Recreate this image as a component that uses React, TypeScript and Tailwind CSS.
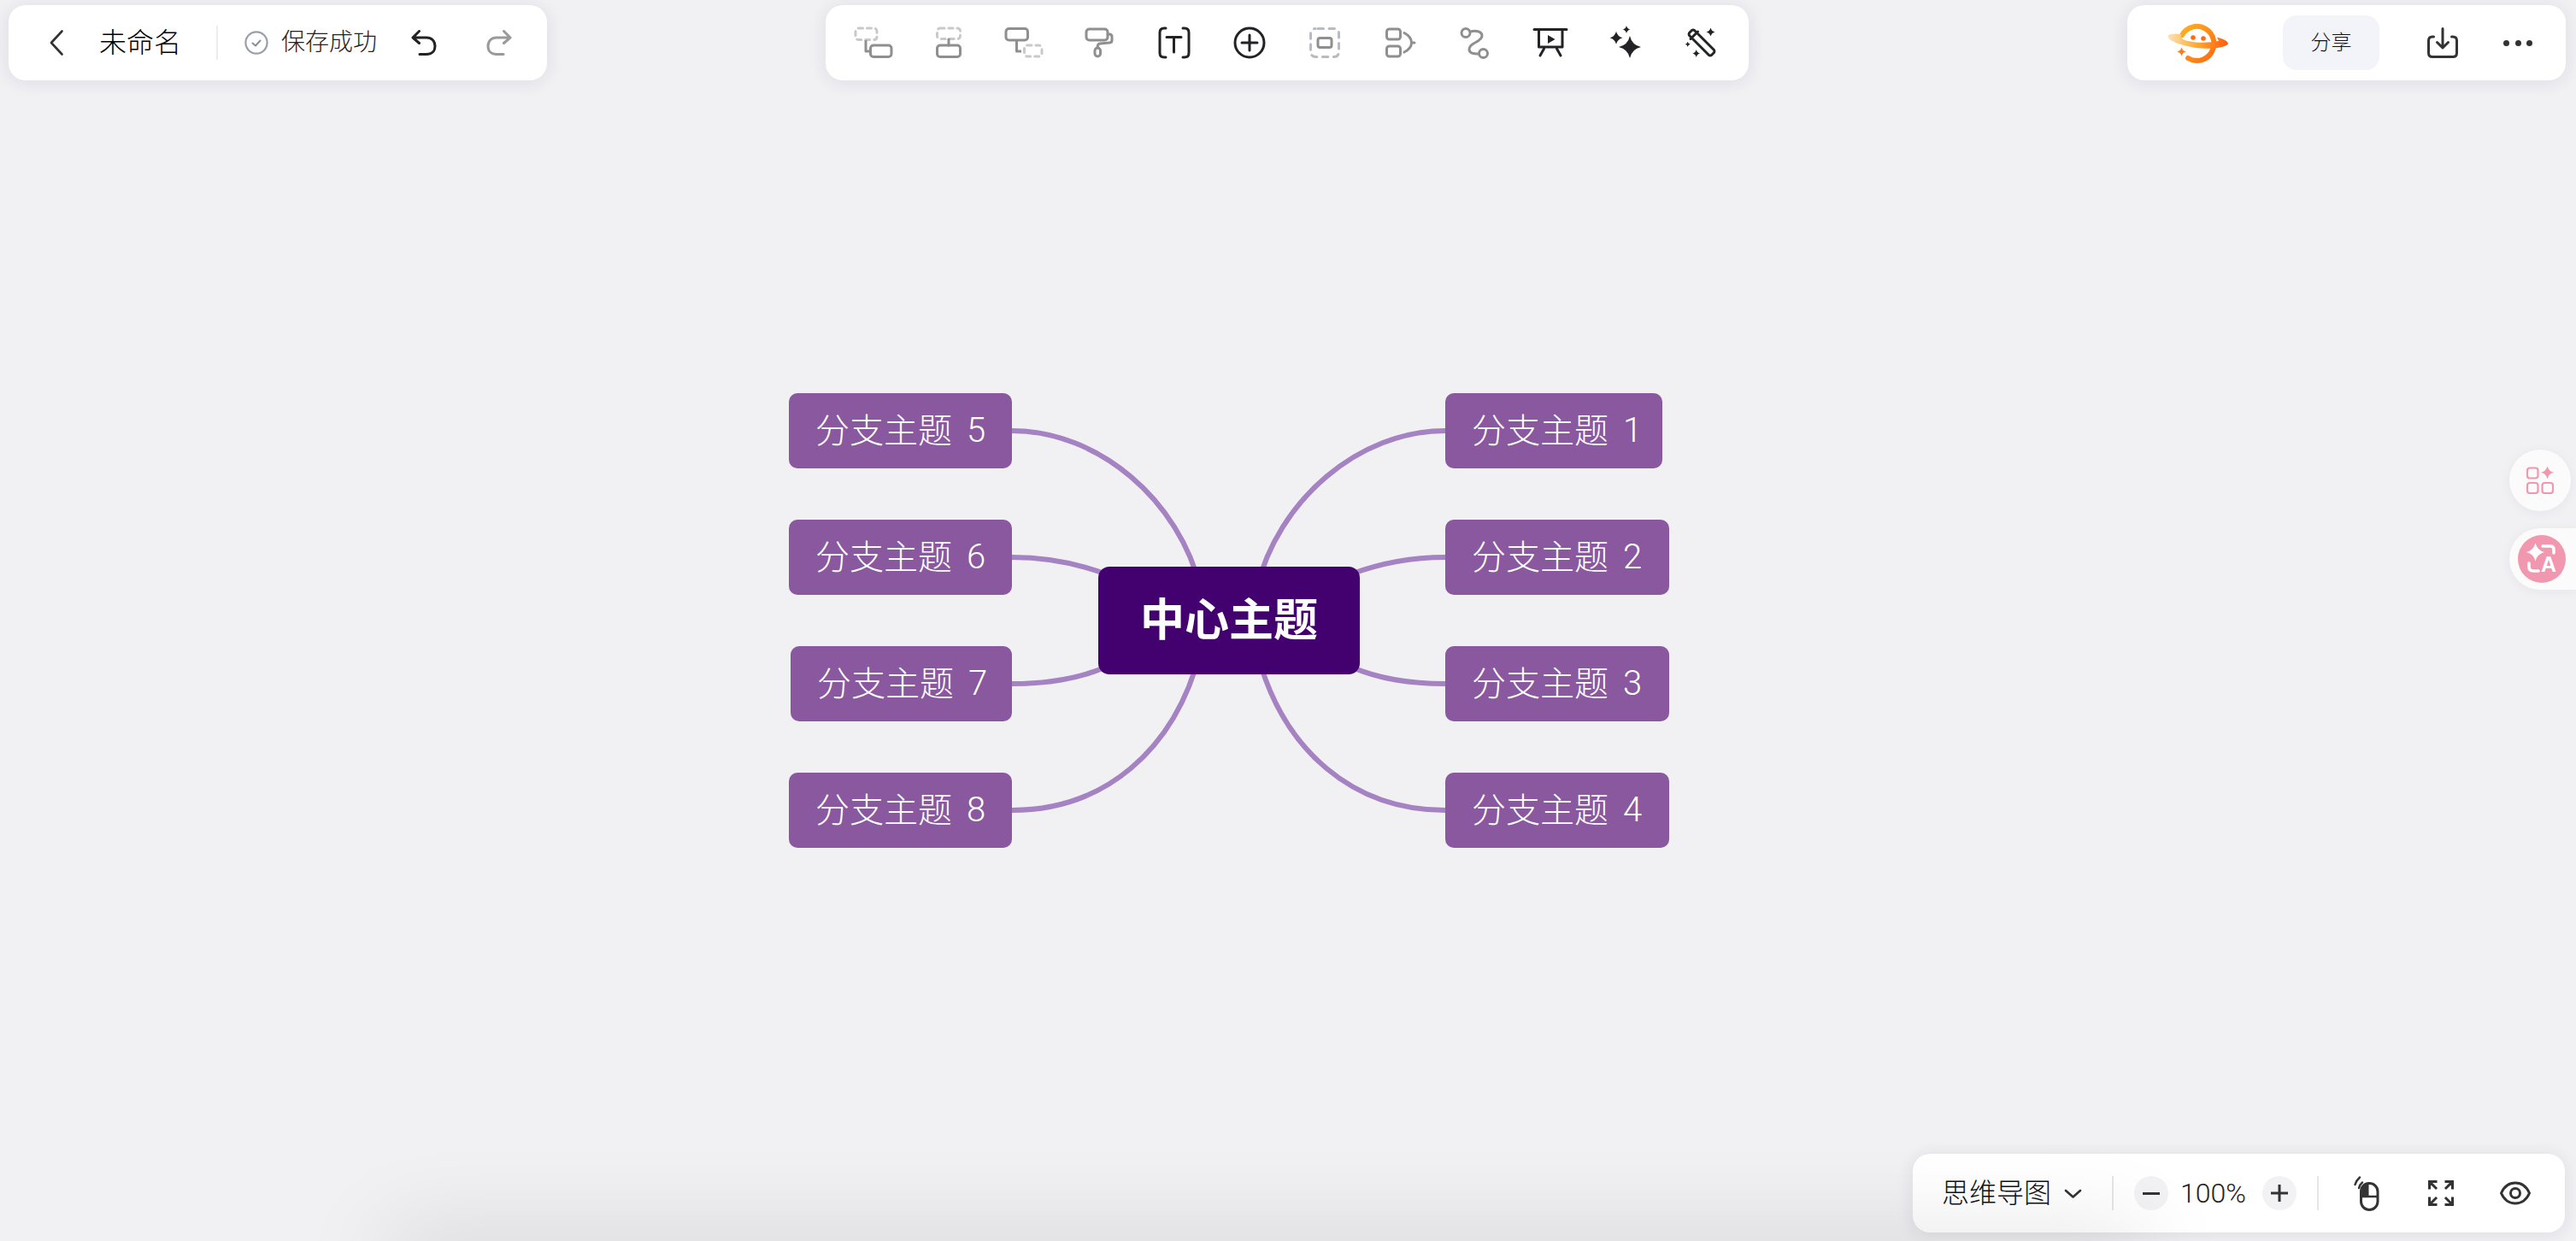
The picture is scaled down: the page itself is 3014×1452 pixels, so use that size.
import React from "react";

const F = { fontFamily: '"Liberation Sans", "Noto Sans CJK SC", sans-serif' };
const G1 = "#8f8f8f";
const G2 = "#c9c9cc";
const D = "#222326";

function star(cx: number, cy: number, r: number, k = 0.16) {
  const c = r * k;
  return `M${cx} ${cy - r}Q${cx + c} ${cy - c} ${cx + r} ${cy}Q${cx + c} ${cy + c} ${cx} ${cy + r}Q${cx - c} ${cy + c} ${cx - r} ${cy}Q${cx - c} ${cy - c} ${cx} ${cy - r}Z`;
}

function Ico({ children }: { children: React.ReactNode }) {
  return (
    <svg viewBox="0 0 48 48" fill="none" strokeWidth={3} strokeLinecap="round" strokeLinejoin="round" className="h-12 w-12 shrink-0">
      {children}
    </svg>
  );
}

const dash = "5 5";

const toolIcons: React.ReactNode[] = [
  <Ico key="1">
    <rect x="3" y="7" width="25" height="13.5" rx="3.5" stroke={G2} strokeDasharray={dash} />
    <path d="M15 21V34H20" stroke={G1} strokeLinecap="butt" />
    <rect x="20.5" y="27" width="24.5" height="13.5" rx="3.5" stroke={G1} />
  </Ico>,
  <Ico key="2">
    <rect x="10.5" y="7" width="27" height="12.5" rx="3.5" stroke={G2} strokeDasharray={dash} />
    <path d="M24 20V27" stroke={G1} />
    <rect x="10.5" y="27" width="27" height="13.5" rx="3.5" stroke={G1} />
  </Ico>,
  <Ico key="3">
    <rect x="3" y="7.5" width="25.5" height="13.5" rx="3.5" stroke={G1} />
    <path d="M15.5 21V34H21" stroke={G1} strokeLinecap="butt" />
    <rect x="24.5" y="27" width="20.5" height="13" rx="3.5" stroke={G2} strokeDasharray={dash} />
  </Ico>,
  <Ico key="4">
    <rect x="9" y="8" width="25" height="13" rx="3.5" stroke={G1} />
    <path d="M34 14H36Q39 14 39 17V21Q39 24 36 24L25 25Q22.3 25.5 22.3 28V30" stroke={G1} />
    <rect x="19" y="30" width="6.5" height="10" rx="3.2" stroke={G1} />
  </Ico>,
  <Ico key="5">
    <path d="M14 7H12Q7 7 7 12V36Q7 41 12 41H14M34 7H36Q41 7 41 12V36Q41 41 36 41H34M15 17.5H32M23.5 17.5V35" stroke={D} />
  </Ico>,
  <Ico key="6">
    <circle cx="24" cy="24" r="17" stroke={D} />
    <path d="M15 24H33M24 15V33" stroke={D} />
  </Ico>,
  <Ico key="7">
    <rect x="7.5" y="7.5" width="33" height="33" rx="5.5" stroke="#b9bbc2" strokeDasharray="6.5 6.5" strokeDashoffset="-3" />
    <rect x="16" y="18.5" width="16" height="11" rx="2.5" stroke={G1} />
  </Ico>,
  <Ico key="8">
    <rect x="8.5" y="8" width="16" height="12" rx="3" stroke={G1} />
    <rect x="8.5" y="28" width="16" height="12" rx="3" stroke={G1} />
    <path d="M29 12.5Q37.5 17 37.5 24Q37.5 30.5 29 35M37.5 24H41" stroke={G1} />
  </Ico>,
  <Ico key="9">
    <circle cx="13" cy="12.5" r="5" stroke={G1} />
    <circle cx="33.5" cy="36.5" r="5" stroke={G1} />
    <path d="M18 11C24 9.5 32 10 32 16C32 23 17 24 17 31.5C17 36.5 22 37 28.5 37" stroke={G1} />
  </Ico>,
  <Ico key="10">
    <path d="M5 8.5H43M10.5 8.5V29H38V8.5M16.5 31L12 39M31.5 31L36 39" stroke={D} />
    <path d="M21 15V25L29.5 20Z" fill={D} />
  </Ico>,
  <Ico key="11">
    <path d={star(29, 29, 13, 0.18)} fill={D} />
    <path d={star(13, 18.3, 7.5, 0.2)} fill={D} />
    <path d={star(25, 8.5, 4.5, 0.2)} fill={D} />
  </Ico>,
  <Ico key="12">
    <path d="M10.5 12.5L13.5 9.5Q15 8.5 16.5 9.5L39.5 32.5Q40.5 34 39.5 35.5L36.5 38.5Q35 39.5 33.5 38.5L10.5 15.5Q9.5 14 10.5 12.5ZM12 19.5L20.5 11" stroke={D} />
    <path d={star(35.5, 11.5, 5, 0.2)} fill={D} />
    <path d={star(18.7, 36.5, 4.5, 0.2)} fill={D} />
    <path d={star(8.7, 25.7, 3, 0.2)} fill={D} />
  </Ico>,
];

const nodesLeft = [
  { t: "5", c: "top-[460px] left-[923px] w-[261px]" },
  { t: "6", c: "top-[608px] left-[923px] w-[261px]" },
  { t: "7", c: "top-[756px] left-[925px] w-[259px]" },
  { t: "8", c: "top-[904px] left-[923px] w-[261px]" },
];
const nodesRight = [
  { t: "1", c: "top-[460px] left-[1691px] w-[254px]" },
  { t: "2", c: "top-[608px] left-[1691px] w-[262px]" },
  { t: "3", c: "top-[756px] left-[1691px] w-[262px]" },
  { t: "4", c: "top-[904px] left-[1691px] w-[262px]" },
];

const leftCurves = [
  "M1184 504C1285 504 1380 585 1405 690",
  "M1184 652C1220 652 1255 657 1295 672",
  "M1184 800C1225 800 1260 795 1295 780",
  "M1184 948C1290 948 1375 880 1405 760",
];

function Node({ t, c }: { t: string; c: string }) {
  return (
    <div style={F} className={`absolute ${c} flex h-[88px] items-center rounded-[10px] bg-[#89589f] pl-[31px] text-[40px] leading-none font-light whitespace-nowrap text-white`}>
      <span>分支主题</span>
      <span className="ml-[17px] font-[Roboto]">{t}</span>
    </div>
  );
}

export default function App() {
  return (
    <div style={F} className="relative h-[1452px] w-[3014px] overflow-hidden bg-[#f1f1f4]">
      {/* canvas */}
      <div className="absolute inset-0">
        <svg viewBox="0 0 3014 1452" className="absolute inset-0 h-[1452px] w-[3014px]" fill="none" stroke="#a583c2" strokeWidth={6}>
          {leftCurves.map((d, i) => (
            <React.Fragment key={i}>
              <path d={d} />
              <path d={d} transform="translate(2875 0) scale(-1 1)" />
            </React.Fragment>
          ))}
        </svg>
        {nodesLeft.map((n) => <Node key={n.t} {...n} />)}
        {nodesRight.map((n) => <Node key={n.t} {...n} />)}
        <div className="absolute top-[663px] left-[1285px] flex h-[126px] w-[306px] items-center justify-center rounded-[13px] bg-[#43006f] text-[52px] leading-none font-bold text-white">
          中心主题
        </div>
      </div>

      {/* toolbars */}
      <div className="relative flex h-full flex-col justify-between pt-[6px] pb-[10px]">
        <div className="flex items-start pl-[10px]">
          {/* left */}
          <div className="flex h-[88px] w-[630px] shrink-0 items-center rounded-[20px] bg-white pl-[48px] shadow-[0_2px_20px_rgba(40,40,80,0.1)]">
            <svg viewBox="0 0 16 30" fill="none" stroke="#333" strokeWidth={2.6} strokeLinecap="round" strokeLinejoin="round" className="h-[30px] w-4">
              <path d="M14.5 1.5L2 15L14.5 28.5" />
            </svg>
            <span className="ml-[42px] text-[32px] leading-none font-light text-black">未命名</span>
            <div className="ml-[41px] h-10 w-[2px] bg-[#ececee]" />
            <svg viewBox="0 0 28 28" fill="none" strokeLinecap="round" strokeLinejoin="round" className="ml-[31px] h-7 w-7">
              <circle cx="14" cy="14" r="12.6" stroke="#9a9ea9" strokeWidth={2.2} />
              <path d="M9.5 14.5L13 17.5L18.5 11.5" stroke="#8a8e99" strokeWidth={2} />
            </svg>
            <span className="ml-[15px] text-[28px] leading-none font-light text-[#222]">保存成功</span>
            <svg viewBox="0 0 30 30" fill="none" stroke="#222" strokeWidth={3} strokeLinecap="round" strokeLinejoin="round" className="ml-[40px] h-[30px] w-[30px]">
              <path d="M9.5 1.5L2 9L9.5 15.5M2 9H18C24 9 28 13 28 19C28 25 24 28.5 18 28.5H10" />
            </svg>
            <svg viewBox="0 0 30 30" fill="none" stroke="#9a9a9a" strokeWidth={3} strokeLinecap="round" strokeLinejoin="round" className="ml-[58px] h-[30px] w-[30px]">
              <path d="M20.5 1.5L28 9L20.5 15.5M28 9H12C6 9 2 13 2 19C2 25 6 28.5 12 28.5H20" />
            </svg>
          </div>
          {/* center */}
          <div className="ml-[326px] flex h-[88px] w-[1080px] shrink-0 items-center gap-10 rounded-[20px] bg-white px-8 shadow-[0_2px_20px_rgba(40,40,80,0.1)]">
            {toolIcons}
          </div>
          {/* right */}
          <div className="ml-[443px] flex h-[88px] w-[513px] shrink-0 items-center rounded-[20px] bg-white pl-[47px] shadow-[0_2px_20px_rgba(40,40,80,0.1)]">
            <svg viewBox="0 0 71 47" fill="none" className="h-[47px] w-[71px] shrink-0">
              <defs>
                <linearGradient id="lg" x1="0" y1="0" x2="1" y2="1">
                  <stop offset="0" stopColor="#ffb01f" />
                  <stop offset="1" stopColor="#ff6a13" />
                </linearGradient>
                <linearGradient id="rg" x1="0" y1="0" x2="1" y2="0">
                  <stop offset="0" stopColor="#fde3b8" />
                  <stop offset="0.5" stopColor="#ffa62b" />
                  <stop offset="1" stopColor="#ff5a10" />
                </linearGradient>
              </defs>
              <path d="M17 14A20 20 0 1 1 24 41" stroke="url(#lg)" strokeWidth={6} strokeLinecap="round" />
              <path d="M0.5 14.5C4 12 10 12 17 13C14 15 16 19 24 21C40 24.5 52 22 60 21L58 16.5C64 18 71 21 71 24.5C66 29 50 31 34 29C14 26 -1 20 0.5 14.5Z" fill="url(#rg)" />
              <circle cx="30" cy="17" r="2.8" fill="#ff6a13" />
              <circle cx="42" cy="18" r="2.8" fill="#ff6a13" />
              <path d={star(16.5, 33.5, 5, 0.2)} fill="#ff7a1a" />
            </svg>
            <div className="ml-[64px] flex h-16 w-[113px] shrink-0 items-center justify-center rounded-[16px] bg-[#f3f4f9] text-[24px] leading-none font-light text-[#111]">
              分享
            </div>
            <svg viewBox="0 0 36 36" fill="none" stroke="#333" strokeWidth={3} strokeLinecap="round" strokeLinejoin="round" className="ml-[56px] h-9 w-9 shrink-0">
              <path d="M7.5 11H6Q1.5 11 1.5 15.5V30Q1.5 34.5 6 34.5H30Q34.5 34.5 34.5 30V15.5Q34.5 11 30 11H28.5M18 1.5V24M11.5 17.5L18 24L24.5 17.5" />
            </svg>
            <div className="ml-[53px] flex gap-[6.5px]">
              <span className="h-[7px] w-[7px] rounded-full bg-[#333]" />
              <span className="h-[7px] w-[7px] rounded-full bg-[#333]" />
              <span className="h-[7px] w-[7px] rounded-full bg-[#333]" />
            </div>
          </div>
        </div>

        <div className="flex justify-end pr-[13px]">
          <div className="flex h-[92px] w-[763px] items-center rounded-[20px] bg-white pl-[34px] shadow-[0_2px_20px_rgba(40,40,80,0.1)]">
            <span className="text-[32px] leading-none font-light text-[#111]">思维导图</span>
            <svg viewBox="0 0 21 11" fill="none" stroke="#333" strokeWidth={2.6} strokeLinecap="round" strokeLinejoin="round" className="ml-[15px] h-[11px] w-[21px]">
              <path d="M2 2L10.5 9.5L19 2" />
            </svg>
            <div className="ml-[35px] h-10 w-[2px] bg-[#e6e6e8]" />
            <div className="ml-[24px] flex h-10 w-10 items-center justify-center rounded-full bg-[#f2f2f4]">
              <span className="h-[3px] w-[20px] bg-[#333]" />
            </div>
            <span className="ml-[14px] w-[80px] font-[Roboto] text-[32px] leading-none font-light text-[#222]">100%</span>
            <div className="ml-[16px] flex h-10 w-10 items-center justify-center rounded-full bg-[#f2f2f4]">
              <svg viewBox="0 0 20 20" stroke="#333" strokeWidth={3} className="h-5 w-5">
                <path d="M0 10H20M10 0V20" />
              </svg>
            </div>
            <div className="ml-[24px] h-10 w-[2px] bg-[#e6e6e8]" />
            <svg viewBox="0 0 30 41" fill="none" className="ml-[41px] h-[41px] w-[30px] shrink-0">
              <rect x="8.5" y="8.5" width="19.5" height="31" rx="9.7" stroke="#333" strokeWidth={3} />
              <path d="M8 24V17.5C8 12 12 7.5 17.5 7.5V24Z" fill="#333" />
              <path d="M8 24H28" stroke="#333" strokeWidth={2.5} />
              <path d="M1.5 10Q3 5 7 1.5M6 14Q7 10 10 7.5" stroke="#333" strokeWidth={2.4} strokeLinecap="round" />
            </svg>
            <svg viewBox="0 0 30 30" fill="none" stroke="#333" strokeWidth={3} strokeLinecap="square" className="ml-[57px] h-[30px] w-[30px] shrink-0">
              <path d="M1.5 9V1.5H9M2 2L9 9M28.5 9V1.5H21M28 2L21 9M1.5 21V28.5H9M2 28L9 21M28.5 21V28.5H21M28 28L21 21" />
            </svg>
            <svg viewBox="0 0 36 28" fill="none" stroke="#333" strokeWidth={3} className="ml-[54px] h-7 w-9 shrink-0">
              <path d="M1.5 14C5 6 11 2 18 2C25 2 31 6 34.5 14C31 22 25 26 18 26C11 26 5 22 1.5 14Z" />
              <circle cx="18" cy="14" r="5.5" />
            </svg>
          </div>
        </div>
      </div>

      {/* floating side buttons */}
      <div className="absolute top-[526px] left-[2936px] flex h-[72px] w-[72px] items-center justify-center rounded-full bg-[#fbfbfc] shadow-[0_2px_14px_rgba(40,40,80,0.05)]">
        <svg viewBox="0 0 32 32" fill="none" stroke="#f197af" strokeWidth={2.2} className="h-8 w-8">
          <rect x="1" y="1.5" width="12.5" height="12" rx="3" />
          <rect x="1" y="19" width="12.5" height="12" rx="3" />
          <rect x="18.5" y="19" width="12.5" height="12" rx="3" />
          <path d={star(24.5, 6.8, 7.5, 0.18)} fill="#f197af" stroke="none" />
        </svg>
      </div>
      <div className="absolute top-[618px] left-[2936px] flex h-[72px] w-[78px] items-center rounded-l-full bg-[#fbfbfc] pl-[10px] shadow-[0_2px_14px_rgba(40,40,80,0.05)]">
        <div className="relative h-14 w-14 rounded-full bg-[#f197af]">
          <svg viewBox="0 0 56 56" fill="none" className="absolute inset-0 h-14 w-14">
            <path d={star(20.5, 20, 10.5, 0.2)} fill="#fff" />
            <path d="M29 13H38Q42 13 42 17V21" stroke="#fff" strokeWidth={3.6} strokeLinecap="round" />
            <path d="M13 33V37Q13 42 18 42H24" stroke="#fff" strokeWidth={3.6} strokeLinecap="round" />
          </svg>
          <span className="absolute top-[22px] left-[27px] text-[25px] leading-none font-bold text-white">A</span>
        </div>
      </div>

      {/* shadow from an element just under the page */}
      <div className="absolute top-[1454px] left-[450px] h-10 w-[2060px] rounded-[16px] bg-white shadow-[0_0_110px_rgba(0,0,0,0.2)]" />
    </div>
  );
}
